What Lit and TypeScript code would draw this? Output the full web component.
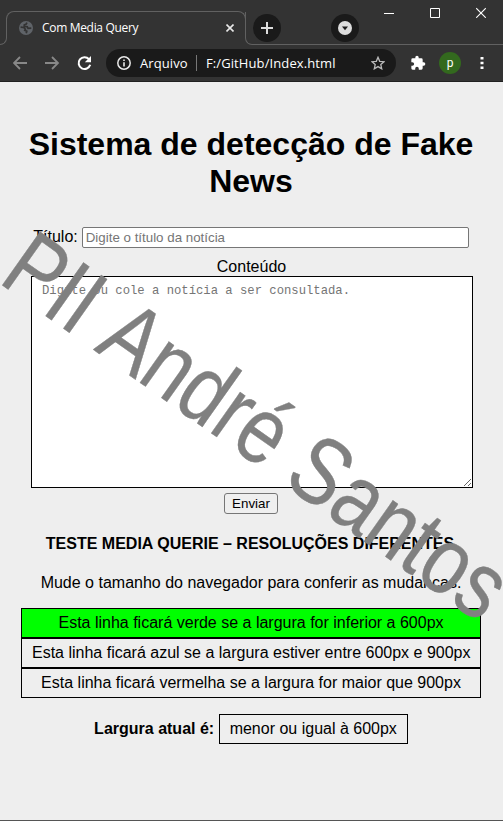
import { LitElement, html, css } from "lit";
import { customElement } from "lit/decorators.js";

@customElement("browser-chrome")
class BrowserChrome extends LitElement {
  static styles = css`
    :host { display: block; height: 82px; flex: none; color: #fff; background: #333;
      font-family: "Open Sans", "Noto Sans", sans-serif; }
    svg { display: block; flex: none; }
    .strip { height: 45px; display: flex; box-sizing: border-box; align-items: flex-start; }
    .edge { width: 7px; height: 33px; margin-top: 12px; box-sizing: border-box; flex: none;
      border: solid #616161; border-width: 0 1px 1px 0; border-radius: 0 0 7px 0; clip-path: inset(6px 0 0 0); }
    .tab { width: 240px; height: 27px; margin: 11px 0 0 -1px; padding: 0 11px 0 12px; box-sizing: border-box;
      border: 1px solid #616161; border-bottom: 0; border-radius: 8px 8px 0 0; display: flex; align-items: center;
      font-size: 12px; letter-spacing: -0.32px; flex: none; }
    .tab span { margin-left: 9px; flex: 1; white-space: nowrap; padding-top: 6px; }
    .tab svg { margin-top: 6px; }
    .tabline { flex: 1; height: 33px; margin: 12px 0 0 -1px; border: 1px solid #616161; border-width: 0 0 1px 1px;
      border-radius: 0 0 0 7px; box-sizing: border-box; display: flex; clip-path: inset(-12px 0 0 0); }
    .round { width: 28px; height: 28px; border-radius: 50%; background: #1a1a1a; display: grid; place-items: center; flex: none; }
    .plus { margin: 2px 0 0 7px; }
    .down { margin: 2px 0 0 50px; }
    .win { display: flex; gap: 36px; margin: -5px 0 0 25px; }
    .bar { height: 37px; box-sizing: border-box; border-bottom: 1px solid #202020; display: flex; align-items: center; padding-left: 13px; }
    .bar > .nav { margin-right: 16px; }
    .address { width: 290px; height: 28px; border-radius: 14px; background: #1a1a1a; display: flex; align-items: center;
      padding: 0 11px; box-sizing: border-box; font-size: 13px; flex: none; margin: 0 14px 0 -3px; }
    .file { margin-left: 9px; width: 49px; white-space: nowrap; letter-spacing: 0.1px; }
    .sep { width: 1px; height: 16px; background: #777; margin: 0 9px 0 7px; }
    .url { flex: 1; white-space: nowrap; letter-spacing: 0.1px; }
    .avatar { width: 22px; height: 22px; border-radius: 50%; background: #33691e; display: grid; place-items: center;
      font: 12px/20px Roboto, sans-serif; margin: 0 19px 0 13px; flex: none; }
  `;
  render() {
    return html`
      <div class="strip">
        <div class="edge"></div>
        <div class="tab">
          <svg width="14" height="14" viewBox="0 0 14 14"><circle cx="7" cy="7" r="7" fill="#5f6368"/>
            <path d="M1.600 6.200 4.600 6.500 6.400 8.200 5.800 9.400 7.800 10.200 7.200 12.200M8 1.600 7 3.200 5.300 3.800 5.200 5.400 8.300 5.700 9 7.400 12.300 7.200" fill="none" stroke="#333" stroke-width="1.700"/></svg>
          <span>Com Media Query</span>
          <svg width="8" height="8" viewBox="0 0 8 8"><path d="M.5.5l7 7m0-7l-7 7" stroke="#e8e8e8" stroke-width="1.600"/></svg>
        </div>
        <div class="tabline">
          <div class="round plus"><svg width="12" height="12" viewBox="0 0 12 12"><path d="M6 0v12M0 6h12" stroke="#ddd" stroke-width="2"/></svg></div>
          <div class="round down"><svg width="14" height="14" viewBox="0 0 14 14"><circle cx="7" cy="7" r="7" fill="#ddd"/><path d="M4 5.500h6L7 9.300z" fill="#1a1a1a"/></svg></div>
          <div class="win">
            <svg width="10" height="11" viewBox="0 0 10 11"><path d="M0 6.500h10" stroke="#fff"/></svg>
            <svg width="10" height="11" viewBox="0 0 10 11"><path d="M.5 1.500h9v9h-9z" fill="none" stroke="#fff"/></svg>
            <svg width="10" height="11" viewBox="0 0 10 11"><path d="M.2 1.200l9.600 9.600m0-9.600L.2 10.800" stroke="#fff" stroke-width="1.100"/></svg>
          </div>
        </div>
      </div>
      <div class="bar">
        <svg class="nav" width="16" height="14" viewBox="0 0 16 14"><path d="M14 7H1.500M7 1L1 7l6 6" fill="none" stroke="#888" stroke-width="1.800"/></svg>
        <svg class="nav" width="16" height="14" viewBox="0 0 16 14"><path d="M0 7h12.500M7 1l6 6-6 6" fill="none" stroke="#888" stroke-width="1.800"/></svg>
        <svg class="nav" width="16" height="16" viewBox="0 0 16 16"><path d="M12 4.200A5.900 5.900 0 1 0 13.200 9.800" fill="none" stroke="#fff" stroke-width="2"/><path d="M14 1v6.200H7.800z" fill="#fff"/></svg>
        <div class="address">
          <svg width="14" height="14" viewBox="0 0 14 14"><circle cx="7" cy="7" r="6.200" fill="none" stroke="#e8e8e8" stroke-width="1.500"/><path d="M7 6.200v4.300M7 3.500V5" stroke="#e8e8e8" stroke-width="1.600"/></svg>
          <span class="file">Arquivo</span><i class="sep"></i><span class="url">F:/GitHub/Index.html</span>
          <svg width="14" height="14" viewBox="0 0 14 14"><path d="M7 1.300l1.700 4 4.300.4-3.200 2.900.9 4.200L7 10.600l-3.700 2.200.9-4.200L1 5.700l4.300-.4z" fill="none" stroke="#bbb" stroke-width="1.300"/></svg>
        </div>
        <svg width="16" height="16" viewBox="0 0 24 24"><path d="M20.500 11H19V7a2 2 0 0 0-2-2h-4V3.500a2.500 2.500 0 0 0-5 0V5H4a2 2 0 0 0-2 2v3.800h1.500a2.700 2.700 0 0 1 0 5.400H2V20a2 2 0 0 0 2 2h3.800v-1.500a2.700 2.700 0 0 1 5.400 0V22H17a2 2 0 0 0 2-2v-4h1.500a2.500 2.500 0 0 0 0-5z" fill="#fff"/></svg>
        <div class="avatar">p</div>
        <svg width="4" height="14" viewBox="0 0 4 14"><path d="M.5 1h3v2.500h-3zM.5 5.800h3v2.500h-3zM.5 10.500h3V13h-3z" fill="#fff"/></svg>
      </div>`;
  }
}

@customElement("app-root")
class AppRoot extends LitElement {
  static styles = css`
    :host { display: flex; flex-direction: column; position: relative; width: 503px; height: 821px; overflow: hidden;
      box-sizing: border-box; background: #eee; color: #000; border-bottom: 1px solid #555;
      font: 16px/18px "Liberation Sans", Arial, sans-serif; }
    main { display: flex; flex-direction: column; align-items: center; width: 502px; text-align: center; white-space: nowrap; }
    h1 { font-size: 32px; line-height: 37px; margin: 44px 20px 27px; white-space: normal; }
    .field { display: flex; align-items: center; gap: 4px; height: 21px; }
    .field span { margin-top: -2px; }
    input { width: 387px; height: 21px; box-sizing: border-box; border: 1px solid #767676; border-radius: 2px; padding: 1px 3px;
      margin: 0; background: #fff; font: 13.333px "Liberation Sans", Arial, sans-serif; }
    .label { margin: 10px 0 0 1px; }
    textarea { display: block; width: 442px; height: 212px; box-sizing: border-box; margin: 0 0 0 2px; border: 1px solid #000; border-radius: 0;
      padding: 6px 10px; font: 12.22px/16px "Liberation Mono", monospace; }
    ::placeholder { color: #757575; }
    button { width: 54px; height: 21px; padding: 0; margin: 5px 0 0; border: 1px solid #767676; border-radius: 3px;
      background: #efefef; color: #000; font: 13.333px "Liberation Sans", Arial, sans-serif; }
    .heading { font-weight: bold; margin: 21px 2px 0 0; }
    .hint { margin-top: 21px; }
    .rows { margin-top: 16px; width: 460px; }
    .box { box-sizing: border-box; height: 30px; border: 1px solid #000; padding: 5px 10px; }
    .green { background: #0f0; }
    .current { margin-top: 16px; display: flex; align-items: center; gap: 4.500px; }
    .mark { position: absolute; left: 0; top: 0; pointer-events: none; font-size: 96px; font-kerning: none;
      fill: #808080; stroke: #808080; stroke-width: .4px; }
  `;
  render() {
    return html`
      <browser-chrome></browser-chrome>
      <main>
        <h1>Sistema de detecção de Fake News</h1>
        <div class="field"><span>Título:</span><input placeholder="Digite o título da notícia"></div>
        <div class="label">Conteúdo</div>
        <textarea placeholder="Digite ou cole a notícia a ser consultada."></textarea>
        <button>Enviar</button>
        <div class="heading">TESTE MEDIA QUERIE – RESOLUÇÕES DIFERENTES</div>
        <div class="hint">Mude o tamanho do navegador para conferir as mudanças.</div>
        <div class="rows">
          <div class="box green">Esta linha ficará verde se a largura for inferior a 600px</div>
          <div class="box">Esta linha ficará azul se a largura estiver entre 600px e 900px</div>
          <div class="box">Esta linha ficará vermelha se a largura for maior que 900px</div>
        </div>
        <div class="current"><b>Largura atual é:</b><div class="box">menor ou igual à 600px</div></div>
      </main>
      <svg class="mark" width="503" height="821"><text transform="translate(-3 281.500) rotate(35.300) scale(.816 .99)">PII André Santos</text></svg>`;
  }
}
